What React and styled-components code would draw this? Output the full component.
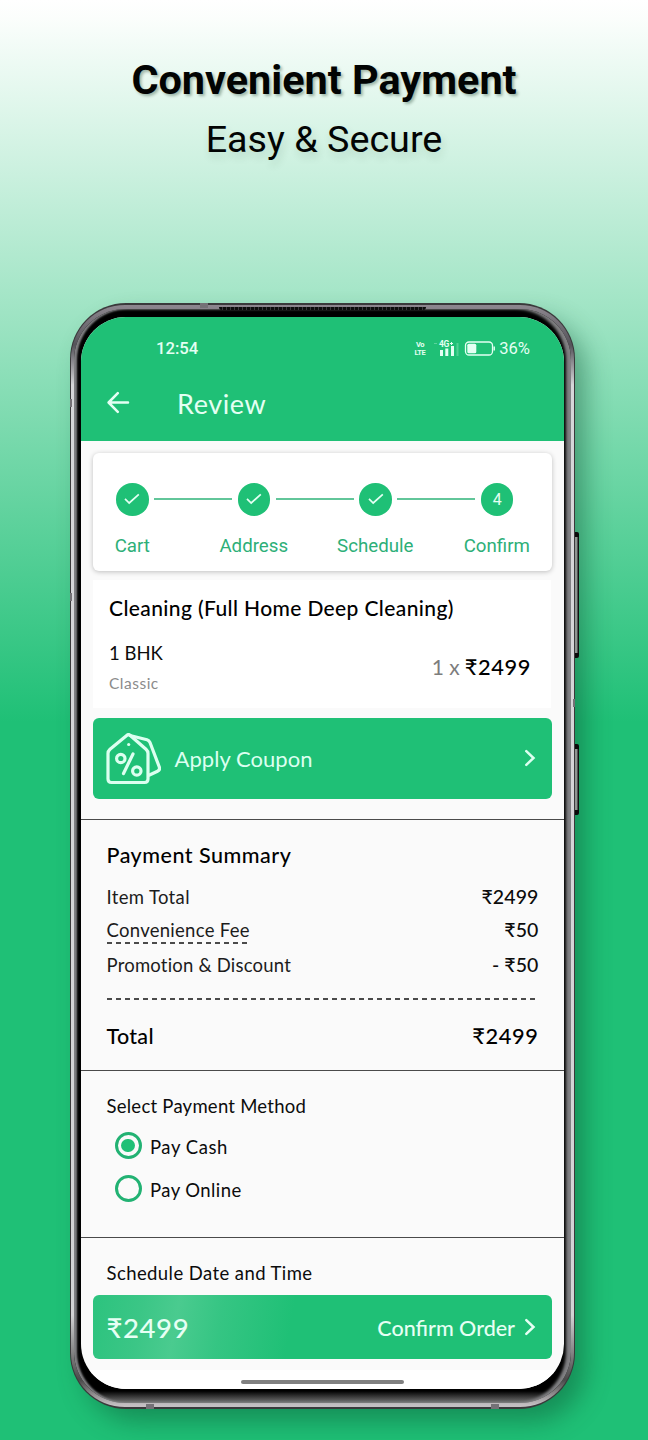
import React from "react";
import styled, { createGlobalStyle, css } from "styled-components";

const GREEN = "#1fc076";

const GlobalStyle = createGlobalStyle`
  *, *::before, *::after { box-sizing: border-box; }
  body { margin: 0; background: ${GREEN}; }
`;

const Page = styled.main`
  width: 648px;
  height: 1440px;
  overflow: hidden;
  display: flex;
  flex-direction: column;
  align-items: center;
  background: linear-gradient(180deg, #ffffff 0, #fbfefc 18px, ${GREEN} 722px);
  font-family: Lato, "Noto Sans", sans-serif;
  color: #0c0c0c;
`;

const Hero = styled.header`
  height: 303px;
  padding-top: 55px;
  display: flex;
  flex-direction: column;
  align-items: center;
  font-family: Roboto, sans-serif;
  color: #020403;
`;

const Title = styled.h1`
  margin: 0;
  font-size: 41.4px;
  font-weight: 700;
  line-height: 50px;
  white-space: nowrap;
  text-shadow: 2px 2px 3px rgba(0, 40, 20, 0.32);
`;

const Subtitle = styled.p`
  margin: 9px 0 0;
  font-size: 37.7px;
  font-weight: 400;
  line-height: 50px;
  white-space: nowrap;
  text-shadow: 2px 5px 8px rgba(0, 60, 30, 0.14);
`;

const Phone = styled.div`
  position: relative;
  width: 505px;
  height: 1106px;
  margin-right: 3px;
  padding: 2px 1px;
  border-radius: 56px;
  background: #3a393b;
  box-shadow: 12px 14px 26px -2px rgba(12, 80, 48, 0.45);
`;

const Rim = styled.div`
  height: 100%;
  padding: 4px 3px;
  border-radius: 54px;
  background: linear-gradient(180deg, #8d878f 0, #55535a 40px, #d6d6d9 80px, #d2d2d4 1010px, #4a4a4a 1075px, #c4bfc2 1100px);
`;

const Bezel = styled.div`
  height: 100%;
  padding: 8px 7px 14px;
  border-radius: 51px;
  background: linear-gradient(180deg, #000 0, #000 1082px, #777 1094px);
  box-shadow: inset 3px 0 2px #808083, inset -5px 0 3px #808083;
`;

const Screen = styled.div`
  height: 1072px;
  width: 483px;
  display: flex;
  flex-direction: column;
  border-radius: 45px;
  overflow: hidden;
  background: #fafafa;
`;

const SideKey = styled.span`
  position: absolute;
  right: -4px;
  top: ${(p) => p.$top}px;
  width: 4px;
  height: ${(p) => p.$height}px;
  border-radius: 0 2px 2px 0;
  background: linear-gradient(180deg, #0a0a0a 5px, transparent 5px, transparent calc(100% - 5px), #0a0a0a calc(100% - 5px)),
    linear-gradient(90deg, #8f9592 0, #8f9592 2px, #111 3px);
`;

const Speaker = styled.span`
  position: absolute;
  top: 4px;
  left: 149px;
  width: 207px;
  height: 3px;
  border-radius: 0 0 3px 3px;
  background: repeating-linear-gradient(90deg, #0c0c0c 0 3px, #39383b 3px 4px);
`;

const Antenna = styled.span`
  position: absolute;
  left: ${(p) => p.$left}px;
  ${(p) => (p.$bottom ? css`bottom: 0;` : css`top: 0;`)}
  width: 8px;
  height: 5px;
  background: #747176;
`;

const SideAntenna = styled.span`
  position: absolute;
  top: ${(p) => p.$top}px;
  ${(p) => (p.$right ? css`right: 0;` : css`left: 0;`)}
  width: 2px;
  height: 8px;
  background: #747176;
`;

const AppHeader = styled.header`
  flex: none;
  height: 123.5px;
  background: ${GREEN};
  color: #e4fff3;
`;

const StatusBar = styled.div`
  height: 62px;
  padding: 1px 34px 0 75px;
  display: flex;
  align-items: center;
  justify-content: space-between;
`;

const StatusIcons = styled.div`
  display: flex;
  align-items: center;
  gap: 4px;
  svg { margin-top: -1px; }
`;

const NavBar = styled.div`
  height: 50px;
  padding-left: 26px;
  display: flex;
  align-items: center;
  gap: 47px;
  svg { margin-top: -4px; }
`;

const Text = styled.span`
  font-family: ${(p) => (p.$roboto ? "Roboto, sans-serif" : "inherit")};
  font-size: ${(p) => p.$size}px;
  font-weight: ${(p) => p.$weight || 400};
  letter-spacing: ${(p) => p.$track || 0}px;
  line-height: ${(p) => p.$line || 26}px;
  color: ${(p) => p.$color || "inherit"};
  white-space: nowrap;
`;

const StepsCard = styled.section`
  flex: none;
  height: 118px;
  margin: 12.5px 12px 0;
  padding-top: 30px;
  border-radius: 6px;
  background: #fff;
  box-shadow: 0 1px 5px rgba(0, 0, 0, 0.24);
`;

const StepTrack = styled.div`
  display: flex;
  align-items: center;
  justify-content: space-between;
  padding: 0 38.5px 0 23px;
`;

const StepDot = styled.div`
  width: 32.5px;
  height: 32.5px;
  border-radius: 50%;
  display: flex;
  align-items: center;
  justify-content: center;
  background: ${GREEN};
  color: #e4fff3;
  ${Text} { padding-top: 2px; }
`;

const StepLine = styled.div`
  width: 78px;
  height: 2px;
  background: #62c69a;
`;

const StepLabels = styled.div`
  display: grid;
  grid-template-columns: repeat(4, 121.5px);
  justify-content: start;
  margin: 17px 0 0 -21.5px;
  text-align: center;
`;

const ItemCard = styled.section`
  flex: none;
  height: 128px;
  margin: 9px 13px 0 12px;
  padding: 15px 21px 0 16px;
  background: #fff;
`;

const ItemRow = styled.div`
  display: flex;
  justify-content: space-between;
  align-items: center;
  margin-top: 19px;
`;

const ItemInfo = styled.div`
  display: flex;
  flex-direction: column;
  gap: 4px;
`;

const Price = styled.div`
  display: flex;
  align-items: baseline;
  gap: 5px;
  margin: -3px -1px 0 0;
`;

const Coupon = styled.button`
  flex: none;
  display: flex;
  align-items: center;
  height: 81px;
  margin: 9.5px 12px 20px;
  padding: 2px 16px 0 13px;
  border: 0;
  border-radius: 6px;
  background: ${GREEN};
  font-family: inherit;
  color: #dcfff0;
  svg:last-child { margin-top: -2px; }
`;

const CouponLabel = styled.span`
  flex: 1;
  display: flex;
  margin-left: 13.5px;
`;

const Panel = styled.section`
  flex: none;
  height: ${(p) => p.$height}px;
  padding: ${(p) => p.$top}px 25.5px 0;
  border-top: 1.4px solid #4a4a4a;
`;

const Row = styled.div`
  display: flex;
  align-items: center;
  justify-content: space-between;
  margin-top: ${(p) => p.$gap}px;
`;

const Dashes = styled.div`
  width: ${(p) => p.$width}px;
  height: 1.5px;
  margin-top: ${(p) => p.$gap}px;
  background: repeating-linear-gradient(90deg, #4a4a4a 0 5px, transparent 5px 9px);
`;

const Option = styled.label`
  display: flex;
  align-items: center;
  gap: 8.5px;
  margin: ${(p) => p.$gap}px 0 0 8px;
  ${Text} { padding-top: 2px; }
`;

const Radio = styled.span`
  width: 27px;
  height: 27px;
  border-radius: 50%;
  border: 3px solid #22b273;
  display: flex;
  align-items: center;
  justify-content: center;
  &::after {
    content: "";
    width: 13.4px;
    height: 13.4px;
    border-radius: 50%;
    background: ${(p) => (p.$on ? GREEN : "transparent")};
  }
`;

const ConfirmButton = styled.button`
  flex: none;
  height: 64px;
  margin: 0 12px;
  padding: 2px 16px 0 13.5px;
  display: flex;
  align-items: center;
  border: 0;
  border-radius: 6px;
  font-family: inherit;
  color: #e6fff4;
  background: linear-gradient(100deg, #2cc37e 0, #3bc686 50px, #4acb8f 86px, #35c583 130px, ${GREEN} 200px);
  svg { margin-top: -2px; }
`;

const ConfirmLabel = styled.span`
  margin-left: auto;
  margin-right: 9px;
  display: flex;
`;

const GestureArea = styled.footer`
  flex: 1;
  margin-top: 11px;
  padding-top: 10.5px;
  display: flex;
  justify-content: center;
  align-items: flex-start;
  background: #fff;
`;

const GestureBar = styled.div`
  width: 163px;
  height: 4px;
  border-radius: 2px;
  background: #808080;
`;

const BackArrow = () => (
  <svg width="23" height="23" viewBox="0 0 23 23" fill="none" stroke="currentColor" strokeWidth="2.5" strokeLinecap="round" strokeLinejoin="round">
    <path d="M21 11.500H2.500M10.800 2.200 1.600 11.500l9.200 9.300" />
  </svg>
);

const Check = () => (
  <svg width="16" height="12" viewBox="0 0 16 12" fill="none" stroke="currentColor" strokeWidth="1.7">
    <path d="M1 5.8 5.2 10 14.8 1.4" />
  </svg>
);

const Chevron = () => (
  <svg width="12" height="18" viewBox="0 0 12 18" fill="none" stroke="currentColor" strokeWidth="2.5" strokeLinecap="round">
    <path d="m2.300 2.200 7.200 6.800-7.200 6.800" />
  </svg>
);

const CouponIcon = () => (
  <svg width="55" height="52" viewBox="0 0 55 52" fill="none" stroke="currentColor" strokeWidth="3.2" strokeLinecap="round" strokeLinejoin="round">
    <path d="M21 2.2 4 16.2Q2 18 2 20.500V46q0 3.500 3.500 3.500h33q3.500 0 3.500-3.500V20.500q0-2.500-2-4.300L24 2.200Q22.500 1 21 2.200Z" />
    <path d="m24 2.500 17 4.200q2 .6 2.900 2.600L53.300 34q1 3-1.800 4.200L43.500 42" />
    <path d="m27 21-9.500 19.500" />
    <circle cx="14.800" cy="25.500" r="4.200" />
    <circle cx="30.800" cy="38" r="4.200" />
    <circle cx="22.700" cy="11.500" r="1.600" fill="currentColor" stroke="none" />
  </svg>
);

const Volte = styled.span`
  display: flex;
  flex-direction: column;
  align-items: center;
  margin-right: 5px;
  font: 700 7.5px/8px Roboto, sans-serif;
  letter-spacing: -0.5px;
`;

const Signal = () => (
  <svg width="26" height="17" viewBox="0 0 26 17" fill="currentColor">
    <text x="5" y="7" fontFamily="Roboto, sans-serif" fontSize="8.500" fontWeight="700" letterSpacing="-0.4">4G</text>
    <path d="M16 3h3v1h-3zM17 2h1v3h-1z" />
    <path d="M6 10h3v6H6zM11.300 8.500h3V16h-3zM17 6h3v10h-3z" />
    <path d="M22.500 3h2v13h-2z" opacity=".25" />
    <path d="M0 3h3v1H0z" opacity=".3" />
  </svg>
);

const Battery = () => (
  <svg width="31" height="15" viewBox="0 0 31 15" fill="none" stroke="currentColor">
    <rect x="1.500" y="1" width="27" height="13" rx="3.500" strokeWidth="1.300" />
    <rect x="3.300" y="2.800" width="9" height="9.400" rx="1.500" fill="currentColor" stroke="none" />
    <path d="M30.200 5.500v4" strokeWidth="1.500" />
  </svg>
);

const steps = ["Cart", "Address", "Schedule", "Confirm"];

export default function App() {
  return (
    <Page>
      <GlobalStyle />
      <Hero>
        <Title>Convenient Payment</Title>
        <Subtitle>Easy &amp; Secure</Subtitle>
      </Hero>
      <Phone>
        <Rim>
          <Bezel>
            <Screen>
              <AppHeader>
                <StatusBar>
                  <Text $size={16.7} $weight={500} $roboto>12:54</Text>
                  <StatusIcons>
                    <Volte><span>Vo</span><span>LTE</span></Volte>
                    <Signal />
                    <Battery />
                    <Text $size={16.6} $roboto>36%</Text>
                  </StatusIcons>
                </StatusBar>
                <NavBar>
                  <BackArrow />
                  <Text $size={27} $track={0.6} $line={34}>Review</Text>
                </NavBar>
              </AppHeader>

              <StepsCard>
                <StepTrack>
                  {steps.map((s, i) => (
                    <React.Fragment key={s}>
                      {i > 0 && <StepLine />}
                      <StepDot>{i < 3 ? <Check /> : <Text $size={16} $roboto>4</Text>}</StepDot>
                    </React.Fragment>
                  ))}
                </StepTrack>
                <StepLabels>
                  {steps.map((s) => (
                    <Text key={s} $roboto $size={18.7} $color="#2daf78">{s}</Text>
                  ))}
                </StepLabels>
              </StepsCard>

              <ItemCard>
                <Text $size={21} $weight={500} $track={0.38} $color="#000">Cleaning (Full Home Deep Cleaning)</Text>
                <ItemRow>
                  <ItemInfo>
                    <Text $size={18.5}>1 BHK</Text>
                    <Text $size={15.5} $track={0.5} $color="#8b8b8b">Classic</Text>
                  </ItemInfo>
                  <Price>
                    <Text $size={21} $color="#7d7d7d">1 x</Text>
                    <Text $size={21.8} $weight={500} $track={0.6} $color="#000">₹2499</Text>
                  </Price>
                </ItemRow>
              </ItemCard>

              <Coupon>
                <CouponIcon />
                <CouponLabel><Text $size={22} $track={0.05}>Apply Coupon</Text></CouponLabel>
                <Chevron />
              </Coupon>

              <Panel $height={251} $top={22}>
                <Row $gap={0}><Text $size={21.5} $weight={500} $track={0.5} $color="#000">Payment Summary</Text></Row>
                <Row $gap={16}>
                  <Text $size={18.5} $track={0.35} $color="#1c1c1c">Item Total</Text>
                  <Text $size={19.5} $weight={500} $track={0.1}>₹2499</Text>
                </Row>
                <Row $gap={7}>
                  <Text $size={18.5} $track={0.28} $color="#1c1c1c">Convenience Fee</Text>
                  <Text $size={19.5} $weight={500} $track={0.1}>₹50</Text>
                </Row>
                <Dashes $width={142} $gap={-0.5} />
                <Row $gap={8.5}>
                  <Text $size={18.5} $track={0.2} $color="#1c1c1c">Promotion &amp; Discount</Text>
                  <Text $size={19.5} $weight={500} $track={0.1}>- ₹50</Text>
                </Row>
                <Dashes $width={428} $gap={20} />
                <Row $gap={23}>
                  <Text $size={21.5} $weight={500} $track={0.3} $color="#000">Total</Text>
                  <Text $size={21.8} $weight={500} $track={0.6} $color="#000">₹2499</Text>
                </Row>
              </Panel>

              <Panel $height={167} $top={22}>
                <Row $gap={0}><Text $size={18.5} $track={0.25}>Select Payment Method</Text></Row>
                <Option $gap={13}><Radio $on /><Text $size={18.5} $track={0.55}>Pay Cash</Text></Option>
                <Option $gap={15}><Radio /><Text $size={18.5} $track={0.42}>Pay Online</Text></Option>
              </Panel>

              <Panel $height={58} $top={22}>
                <Row $gap={0}><Text $size={18.5} $track={0.42}>Schedule Date and Time</Text></Row>
              </Panel>

              <ConfirmButton>
                <Text $size={27.5} $weight={500} $track={0.6}>₹2499</Text>
                <ConfirmLabel><Text $size={21.5} $weight={500}>Confirm Order</Text></ConfirmLabel>
                <Chevron />
              </ConfirmButton>
              <GestureArea><GestureBar /></GestureArea>
            </Screen>
          </Bezel>
        </Rim>
        <Speaker />
        <Antenna $left={130} />
        <Antenna $left={76} $bottom />
        <Antenna $left={421} $bottom />
        <SideAntenna $top={96} />
        <SideAntenna $top={290} />
        <SideAntenna $top={396} $right />
        <SideKey $top={229} $height={126} />
        <SideKey $top={441} $height={71} />
      </Phone>
    </Page>
  );
}
